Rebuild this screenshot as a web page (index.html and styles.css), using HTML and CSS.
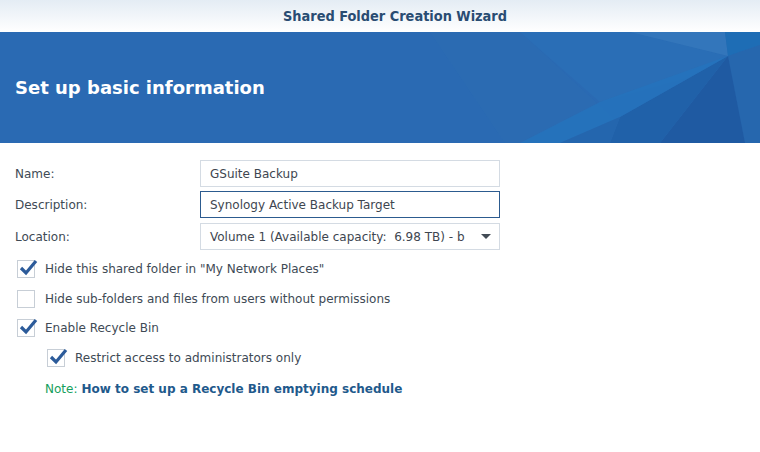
FILE: index.html
```html
<!DOCTYPE html>
<html>
<head>
<meta charset="utf-8">
<link rel="stylesheet" href="styles.css">
</head>
<body>
<div class="window">
  <div class="titlebar">Shared Folder Creation Wizard</div>
  <div class="banner">
    <svg class="banner-art" width="760" height="111" viewBox="0 0 760 111" preserveAspectRatio="none">
      <polygon points="430,0 520,0 640,111 505,111" fill="#2c6cb2" opacity="0.7"/>
      <polygon points="520,0 630,0 728,24 690,45 600,70" fill="#2b6fb6" opacity="0.8"/>
      <polygon points="630,0 725,0 728,24" fill="#3a7fc0" opacity="0.6"/>
      <polygon points="725,0 760,0 760,13 728,24" fill="#1e6db5"/>
      <polygon points="728,24 760,13 760,111 745,111" fill="#2667ae"/>
      <polygon points="728,24 745,111 660,111" fill="#1f5aa2"/>
      <polygon points="728,24 660,111 610,111 620,85" fill="#2061a9"/>
      <polygon points="600,70 728,24 620,85 560,111 520,111" fill="#2474bd" opacity="0.75"/>
      <polygon points="560,111 620,85 610,111" fill="#2466ae"/>
    </svg>
    <h1 class="banner-title">Set up basic information</h1>
  </div>
  <div class="form">
    <div class="field">
      <label class="field-label">Name:</label>
      <div class="input">GSuite Backup</div>
    </div>
    <div class="field">
      <label class="field-label">Description:</label>
      <div class="input input-focus">Synology Active Backup Target</div>
    </div>
    <div class="field">
      <label class="field-label">Location:</label>
      <div class="input input-select"><span>Volume 1 (Available capacity:&nbsp; 6.98 TB) - b</span><span class="caret"></span></div>
    </div>
    <div class="check-row first">
      <span class="checkbox checked"><svg viewBox="0 0 20 20" width="20" height="20"><path d="M3 10 L8 15 L18 3" fill="none" stroke="#2c5b9a" stroke-width="3.2" stroke-linejoin="miter"/></svg></span>
      <span class="check-text">Hide this shared folder in "My Network Places"</span>
    </div>
    <div class="check-row">
      <span class="checkbox"></span>
      <span class="check-text">Hide sub-folders and files from users without permissions</span>
    </div>
    <div class="check-row">
      <span class="checkbox checked"><svg viewBox="0 0 20 20" width="20" height="20"><path d="M3 10 L8 15 L18 3" fill="none" stroke="#2c5b9a" stroke-width="3.2" stroke-linejoin="miter"/></svg></span>
      <span class="check-text">Enable Recycle Bin</span>
    </div>
    <div class="check-row nested">
      <span class="checkbox checked"><svg viewBox="0 0 20 20" width="20" height="20"><path d="M3 10 L8 15 L18 3" fill="none" stroke="#2c5b9a" stroke-width="3.2" stroke-linejoin="miter"/></svg></span>
      <span class="check-text">Restrict access to administrators only</span>
    </div>
    <div class="note nested"><span class="note-label">Note:</span> <a class="note-link">How to set up a Recycle Bin emptying schedule</a></div>
  </div>
</div>
</body>
</html>
```
FILE: styles.css
```css
html, body { margin: 0; padding: 0; background: #fff; }
body { font-family: "DejaVu Sans", Verdana, sans-serif; font-size: 12px; color: #404a55; }
.window { width: 760px; height: 452px; overflow: hidden; }
.titlebar {
  height: 32px;
  background: linear-gradient(#e4ecf4, #ffffff);
  display: flex; align-items: center; justify-content: center;
  padding-left: 30px; padding-bottom: 1px; box-sizing: border-box;
  font-family: "DejaVu Sans Condensed", "DejaVu Sans", sans-serif;
  font-weight: bold; font-size: 14.4px; color: #294c72;
}
.banner {
  position: relative;
  height: 111px;
  background: #2a6ab3;
  display: flex; align-items: center;
  padding-left: 15px;
}
.banner-art { position: absolute; left: 0; top: 0; }
.banner-title {
  position: relative;
  margin: 0; color: #fff; font-size: 18px; font-weight: bold;
  font-family: "DejaVu Sans", Verdana, sans-serif;
}
.form { padding: 17px 0 0 15px; }
.field { display: flex; align-items: center; height: 27px; margin-bottom: 5px; }
.field:first-child { margin-bottom: 4px; }
.field-label { width: 185px; }
.input {
  width: 300px; box-sizing: border-box;
  height: 27px;
  border: 1px solid #d4dbe3;
  padding: 0 9px;
  display: flex; align-items: center;
  color: #3e4650;
}
.input-focus { border-color: #2c5b8f; }
.input-select { justify-content: space-between; padding-right: 8px; }
.caret { width: 0; height: 0; border-left: 5px solid transparent; border-right: 5px solid transparent; border-top: 5px solid #424b55; }
.check-row { display: flex; align-items: center; height: 29.7px; margin-left: 2px; }
.check-row.first { margin-top: -1px; }
.checkbox {
  width: 16px; height: 16px; border: 1px solid #c7ced6; background: #fff;
  position: relative; flex: none; margin-right: 10px;
}
.checkbox svg { position: absolute; left: 0px; top: -3px; }
.nested { margin-left: 32px; }
.note { height: 30px; display: flex; align-items: center; margin-left: 30px; margin-top: 1px; }
.note-label { color: #16a05c; margin-right: 4px; }
.note-link { color: #1f5a8c; font-weight: bold; }
```
